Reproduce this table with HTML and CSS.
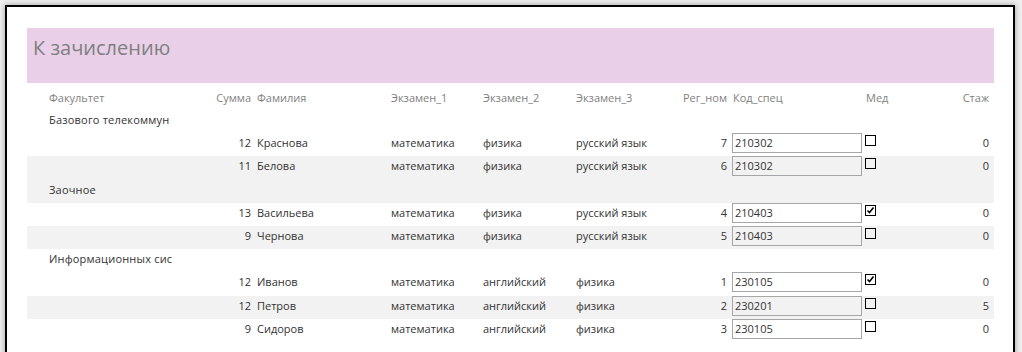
FILE: index.html
```html
<!DOCTYPE html>
<html lang="ru">
<head>
<meta charset="utf-8">
<title>К зачислению</title>
<link rel="stylesheet" href="styles.css">
</head>
<body>
<div class="page">
  <div class="band"><h1 class="title">К зачислению</h1></div>
  <div class="report">
    <div class="row head">
      <div class="c fac">Факультет</div>
      <div class="c sum">Сумма</div>
      <div class="c fam">Фамилия</div>
      <div class="c ex">Экзамен_1</div>
      <div class="c ex">Экзамен_2</div>
      <div class="c ex">Экзамен_3</div>
      <div class="c reg">Рег_ном</div>
      <div class="c kod kodlbl">Код_спец</div>
      <div class="c med medlbl">Мед</div>
      <div class="c staj">Стаж</div>
    </div>

    <div class="group">Базового телекоммун</div>
    <div class="row det">
      <div class="c fac"></div><div class="c sum">12</div><div class="c fam">Краснова</div>
      <div class="c ex">математика</div><div class="c ex">физика</div><div class="c ex">русский язык</div>
      <div class="c reg">7</div><div class="c kod"><span class="box">210302</span></div>
      <div class="c med"><span class="chk"></span></div><div class="c staj">0</div>
    </div>
    <div class="row det alt">
      <div class="c fac"></div><div class="c sum">11</div><div class="c fam">Белова</div>
      <div class="c ex">математика</div><div class="c ex">физика</div><div class="c ex">русский язык</div>
      <div class="c reg">6</div><div class="c kod"><span class="box">210302</span></div>
      <div class="c med"><span class="chk"></span></div><div class="c staj">0</div>
    </div>

    <div class="group alt">Заочное</div>
    <div class="row det">
      <div class="c fac"></div><div class="c sum">13</div><div class="c fam">Васильева</div>
      <div class="c ex">математика</div><div class="c ex">физика</div><div class="c ex">русский язык</div>
      <div class="c reg">4</div><div class="c kod"><span class="box">210403</span></div>
      <div class="c med"><span class="chk on"><svg viewBox="0 0 11 11" width="11" height="11"><path d="M2.5 5.5 L4.5 7.5 L8.5 2.5" fill="none" stroke="#000" stroke-width="1.6"/></svg></span></div><div class="c staj">0</div>
    </div>
    <div class="row det alt">
      <div class="c fac"></div><div class="c sum">9</div><div class="c fam">Чернова</div>
      <div class="c ex">математика</div><div class="c ex">физика</div><div class="c ex">русский язык</div>
      <div class="c reg">5</div><div class="c kod"><span class="box">210403</span></div>
      <div class="c med"><span class="chk"></span></div><div class="c staj">0</div>
    </div>

    <div class="group">Информационных сис</div>
    <div class="row det">
      <div class="c fac"></div><div class="c sum">12</div><div class="c fam">Иванов</div>
      <div class="c ex">математика</div><div class="c ex">английский</div><div class="c ex">физика</div>
      <div class="c reg">1</div><div class="c kod"><span class="box">230105</span></div>
      <div class="c med"><span class="chk on"><svg viewBox="0 0 11 11" width="11" height="11"><path d="M2.5 5.5 L4.5 7.5 L8.5 2.5" fill="none" stroke="#000" stroke-width="1.6"/></svg></span></div><div class="c staj">0</div>
    </div>
    <div class="row det alt">
      <div class="c fac"></div><div class="c sum">12</div><div class="c fam">Петров</div>
      <div class="c ex">математика</div><div class="c ex">английский</div><div class="c ex">физика</div>
      <div class="c reg">2</div><div class="c kod"><span class="box">230201</span></div>
      <div class="c med"><span class="chk"></span></div><div class="c staj">5</div>
    </div>
    <div class="row det">
      <div class="c fac"></div><div class="c sum">9</div><div class="c fam">Сидоров</div>
      <div class="c ex">математика</div><div class="c ex">английский</div><div class="c ex">физика</div>
      <div class="c reg">3</div><div class="c kod"><span class="box">230105</span></div>
      <div class="c med"><span class="chk"></span></div><div class="c staj">0</div>
    </div>
  </div>
</div>
</body>
</html>
```

FILE: styles.css
```css
html, body {
  margin: 0;
  padding: 0;
  height: 100%;
  overflow: hidden;
}
body {
  background: #efefef;
  padding: 5px 0 0 5px;
  box-sizing: border-box;
  font-family: "Open Sans", "Noto Sans", sans-serif;
  font-size: 11px;
  color: #333;
}
.page {
  width: 1010px;
  height: 420px;
  box-sizing: border-box;
  background: #fff;
  border: 2px solid #000;
  border-bottom: none;
  box-shadow: 0 0 6px rgba(0, 0, 0, 0.35);
  padding: 21px 0 0 20px;
}
.band {
  width: 967px;
  height: 55px;
  background: #e9d0e8;
  box-sizing: border-box;
  padding: 7px 0 0 6px;
}
.title {
  margin: 0;
  font-size: 20px;
  font-weight: normal;
  line-height: 26px;
  color: #7f7f7f;
}
.report {
  width: 967px;
}
.row {
  display: grid;
  grid-template-columns: 148px 54px 140px 92px 93px 101px 50px 135px 65px 62px;
  padding-left: 22px;
  height: 23.2px;
  line-height: 20px;
  white-space: nowrap;
}
.row.head {
  height: 27px;
  padding-top: 5px;
  box-sizing: border-box;
  color: #7f7f7f;
}
.alt {
  background: #f2f2f2;
}
.group {
  height: 23.2px;
  line-height: 20px;
  padding-left: 22px;
  white-space: nowrap;
  letter-spacing: 0.2px;
}
.c {
  overflow: hidden;
}
.sum, .reg, .staj {
  text-align: right;
}
.fam {
  padding-left: 6px;
}
.kod {
  padding-left: 5px;
}
.kodlbl {
  padding-left: 6px;
}
.med {
  padding-left: 3px;
}
.medlbl {
  padding-left: 4px;
}
.box {
  display: block;
  width: 130px;
  height: 20px;
  box-sizing: border-box;
  border: 1px solid #a6a6a6;
  padding-left: 2px;
  line-height: 18px;
}
.chk {
  display: block;
  width: 11px;
  height: 11px;
  margin-top: 2px;
  box-sizing: border-box;
  border: 1px solid #000;
  position: relative;
}
.chk svg {
  position: absolute;
  left: -1px;
  top: -1px;
}
```
